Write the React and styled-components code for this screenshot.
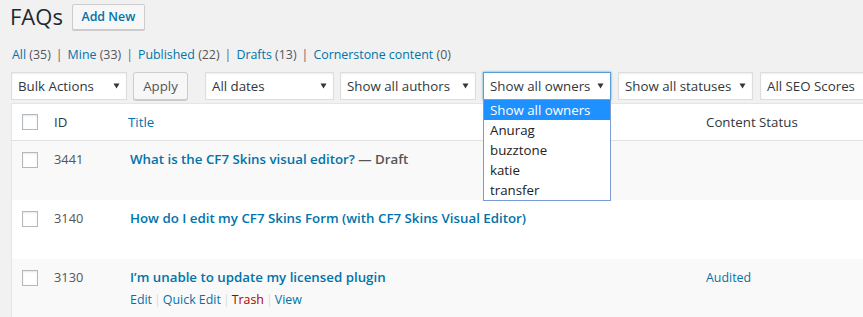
import React from 'react';
import styled, { createGlobalStyle } from 'styled-components';

const GlobalStyle = createGlobalStyle`
    body {
        margin: 0;
        background: #f1f1f1;
        overflow: hidden;
        font-family: "Open Sans", "Noto Sans", sans-serif;
        color: #444;
    }
`

const counts = [
    { label: 'All', count: 35 },
    { label: 'Mine', count: 33 },
    { label: 'Published', count: 22 },
    { label: 'Drafts', count: 13 },
    { label: 'Cornerstone content', count: 0 },
]

const owners = ['Show all owners', 'Anurag', 'buzztone', 'katie', 'transfer']

const rows = [
    { id: 3441, title: 'What is the CF7 Skins visual editor?', state: 'Draft', status: '', alt: true },
    { id: 3140, title: 'How do I edit my CF7 Skins Form (with CF7 Skins Visual Editor)', state: '', status: '', alt: false },
    { id: 3130, title: 'I’m unable to update my licensed plugin', state: '', status: 'Audited', alt: true, actions: true },
]

// small sizes matched to the Segoe UI widths of the screenshot
const BIG = '13.3px'
const SMALL = '12.4px'

const Arrow = () => (
    <svg width="7" height="6" viewBox="0 0 7 6">
        <path d="M0.5 0.5 L6.5 0.5 L3.5 5.5 Z" fill="#32373c" />
    </svg>
)

function App() {
    return (
        <Wrap>
            <GlobalStyle />
            <Heading>
                <Title>FAQs</Title>
                <AddNew>Add New</AddNew>
            </Heading>
            <SubSub>
                {counts.map((c, i) => (
                    <li key={c.label}>
                        <SubLink>{c.label}</SubLink> <Count>({c.count})</Count>
                        {i < counts.length - 1 && <Sep>|</Sep>}
                    </li>
                ))}
            </SubSub>
            <Toolbar>
                <Select width={116}><span>Bulk Actions</span><Arrow /></Select>
                <Button>Apply</Button>
                <Select width={129} ml={11}><span>All dates</span><Arrow /></Select>
                <Select width={136}><span>Show all authors</span><Arrow /></Select>
                <Select width={128} ml={1} focused>
                    <span>Show all owners</span><Arrow />
                    <Dropdown>
                        {owners.map((o, i) => <Option key={o} selected={i === 0}>{o}</Option>)}
                    </Dropdown>
                </Select>
                <Select width={135} ml={1}><span>Show all statuses</span><Arrow /></Select>
                <Select width={140} ml={1}><span>All SEO Scores</span><Arrow /></Select>
            </Toolbar>
            <Table>
                <HeadRow>
                    <Cell><Check /></Cell>
                    <HeadCell>ID</HeadCell>
                    <HeadCell link>Title</HeadCell>
                    <HeadCell>Content Status</HeadCell>
                </HeadRow>
                {rows.map(r => (
                    <Row key={r.id} alt={r.alt}>
                        <Cell><Check /></Cell>
                        <IdCell>{r.id}</IdCell>
                        <TitleCell>
                            <RowTitle>
                                <TitleLink>{r.title}</TitleLink>
                                {r.state && <State> — {r.state}</State>}
                            </RowTitle>
                            {r.actions && (
                                <Actions>
                                    <ActionLink>Edit</ActionLink><ActionSep>|</ActionSep>
                                    <ActionLink>Quick Edit</ActionLink><ActionSep>|</ActionSep>
                                    <ActionLink danger>Trash</ActionLink><ActionSep>|</ActionSep>
                                    <ActionLink>View</ActionLink>
                                </Actions>
                            )}
                        </TitleCell>
                        <StatusCell>{r.status}</StatusCell>
                    </Row>
                ))}
            </Table>
        </Wrap>
    )
}

export default App;

const Wrap = styled.div`
    padding-left: 11px;
    width: 1200px;
`

const Heading = styled.div`
    display: flex;
    align-items: center;
    padding-top: 4px;
    height: 25px;
`

const Title = styled.h1`
    margin: 0 9px 0 -1px;
    font-size: 22px;
    font-weight: 400;
    color: #23282d;
    line-height: 25px;
`

const AddNew = styled.button`
    box-sizing: border-box;
    width: 73px;
    height: 26px;
    padding: 0;
    font-family: inherit;
    font-size: ${SMALL};
    font-weight: 600;
    color: #0073aa;
    background: #f7f7f7;
    border: 1px solid #ccc;
    border-radius: 2px;
    box-shadow: 0 1px 0 #ccc;
`

const SubSub = styled.ul`
    display: flex;
    list-style: none;
    margin: 16px 0 0;
    padding: 0 0 0 1px;
    font-size: ${SMALL};
    line-height: 20px;
    color: #555;
`

const SubLink = styled.span`
    color: #0073aa;
`

const Count = styled.span`
    color: #555;
`

const Sep = styled.span`
    color: #666;
    margin: 0 5px;
`

const Toolbar = styled.div`
    display: flex;
    gap: 6px;
    margin-top: 7px;
    height: 28px;
`

const Select = styled.div`
    position: relative;
    box-sizing: border-box;
    width: ${p => p.width}px;
    flex: none;
    height: 28px;
    margin-left: ${p => p.ml || 0}px;
    display: flex;
    align-items: center;
    justify-content: space-between;
    padding: 0 6px 0 6px;
    background: #fff;
    border: 1px solid ${p => (p.focused ? '#5b9dd9' : '#ddd')};
    box-shadow: ${p => (p.focused ? '0 0 2px rgba(30,140,190,.8)' : 'inset 0 1px 2px rgba(0,0,0,.07)')};
    font-size: ${BIG};
    color: #32373c;
    white-space: nowrap;
`

const Dropdown = styled.div`
    position: absolute;
    top: 100%;
    left: -1px;
    right: -1px;
    z-index: 5;
    background: #fff;
    border: 1px solid #7a9cd3;
`

const Option = styled.div`
    height: 20px;
    line-height: 20px;
    padding-left: 6px;
    font-size: ${BIG};
    color: ${p => (p.selected ? '#fff' : '#222')};
    background: ${p => (p.selected ? '#1e90ff' : '#fff')};
`

const Button = styled.button`
    box-sizing: border-box;
    width: 55px;
    height: 28px;
    font-family: inherit;
    font-size: ${BIG};
    color: #555;
    background: #f7f7f7;
    border: 1px solid #ccc;
    border-radius: 3px;
    box-shadow: 0 1px 0 #ccc;
`

const Table = styled.div`
    margin-top: 3px;
    background: #fff;
    border: 1px solid #e5e5e5;
    border-right: none;
`

const cols = '32px 74px 578px 200px 1fr'

const HeadRow = styled.div`
    display: grid;
    grid-template-columns: ${cols};
    height: 36px;
    align-items: center;
    border-bottom: 1px solid #e1e1e1;
`

const Row = styled.div`
    display: grid;
    grid-template-columns: ${cols};
    height: 59px;
    align-items: start;
    background: ${p => (p.alt ? '#f9f9f9' : '#fff')};
`

const Cell = styled.div`
    padding: 0 0 0 10px;
    display: flex;
    align-items: center;
    ${Row} & {
        padding-top: 11px;
    }
`

const Check = styled.span`
    display: block;
    box-sizing: border-box;
    width: 16px;
    height: 16px;
    background: #fff;
    border: 1px solid #b4b9be;
    box-shadow: inset 0 1px 2px rgba(0,0,0,.1);
`

const HeadCell = styled.div`
    padding-left: 10px;
    font-size: ${BIG};
    color: ${p => (p.link ? '#0073aa' : '#32373c')};
`

const IdCell = styled.div`
    padding: 9px 0 0 10px;
    font-size: 12.8px;
    line-height: 19px;
    color: #555;
`

const TitleCell = styled.div`
    padding: 8px 0 0 12px;
`

const RowTitle = styled.div`
    font-size: ${BIG};
    font-weight: 600;
    line-height: 20px;
    white-space: nowrap;
`

const TitleLink = styled.span`
    color: #0073aa;
`

const State = styled.span`
    color: #555;
`

const Actions = styled.div`
    margin-top: 4px;
    font-size: ${SMALL};
    line-height: 18px;
    color: #ddd;
`

const ActionLink = styled.span`
    color: ${p => (p.danger ? '#a00' : '#0073aa')};
`

const ActionSep = styled.span`
    margin: 0 2px;
`

const StatusCell = styled.div`
    padding: 9px 0 0 10px;
    font-size: ${SMALL};
    line-height: 19px;
    color: #0073aa;
`
